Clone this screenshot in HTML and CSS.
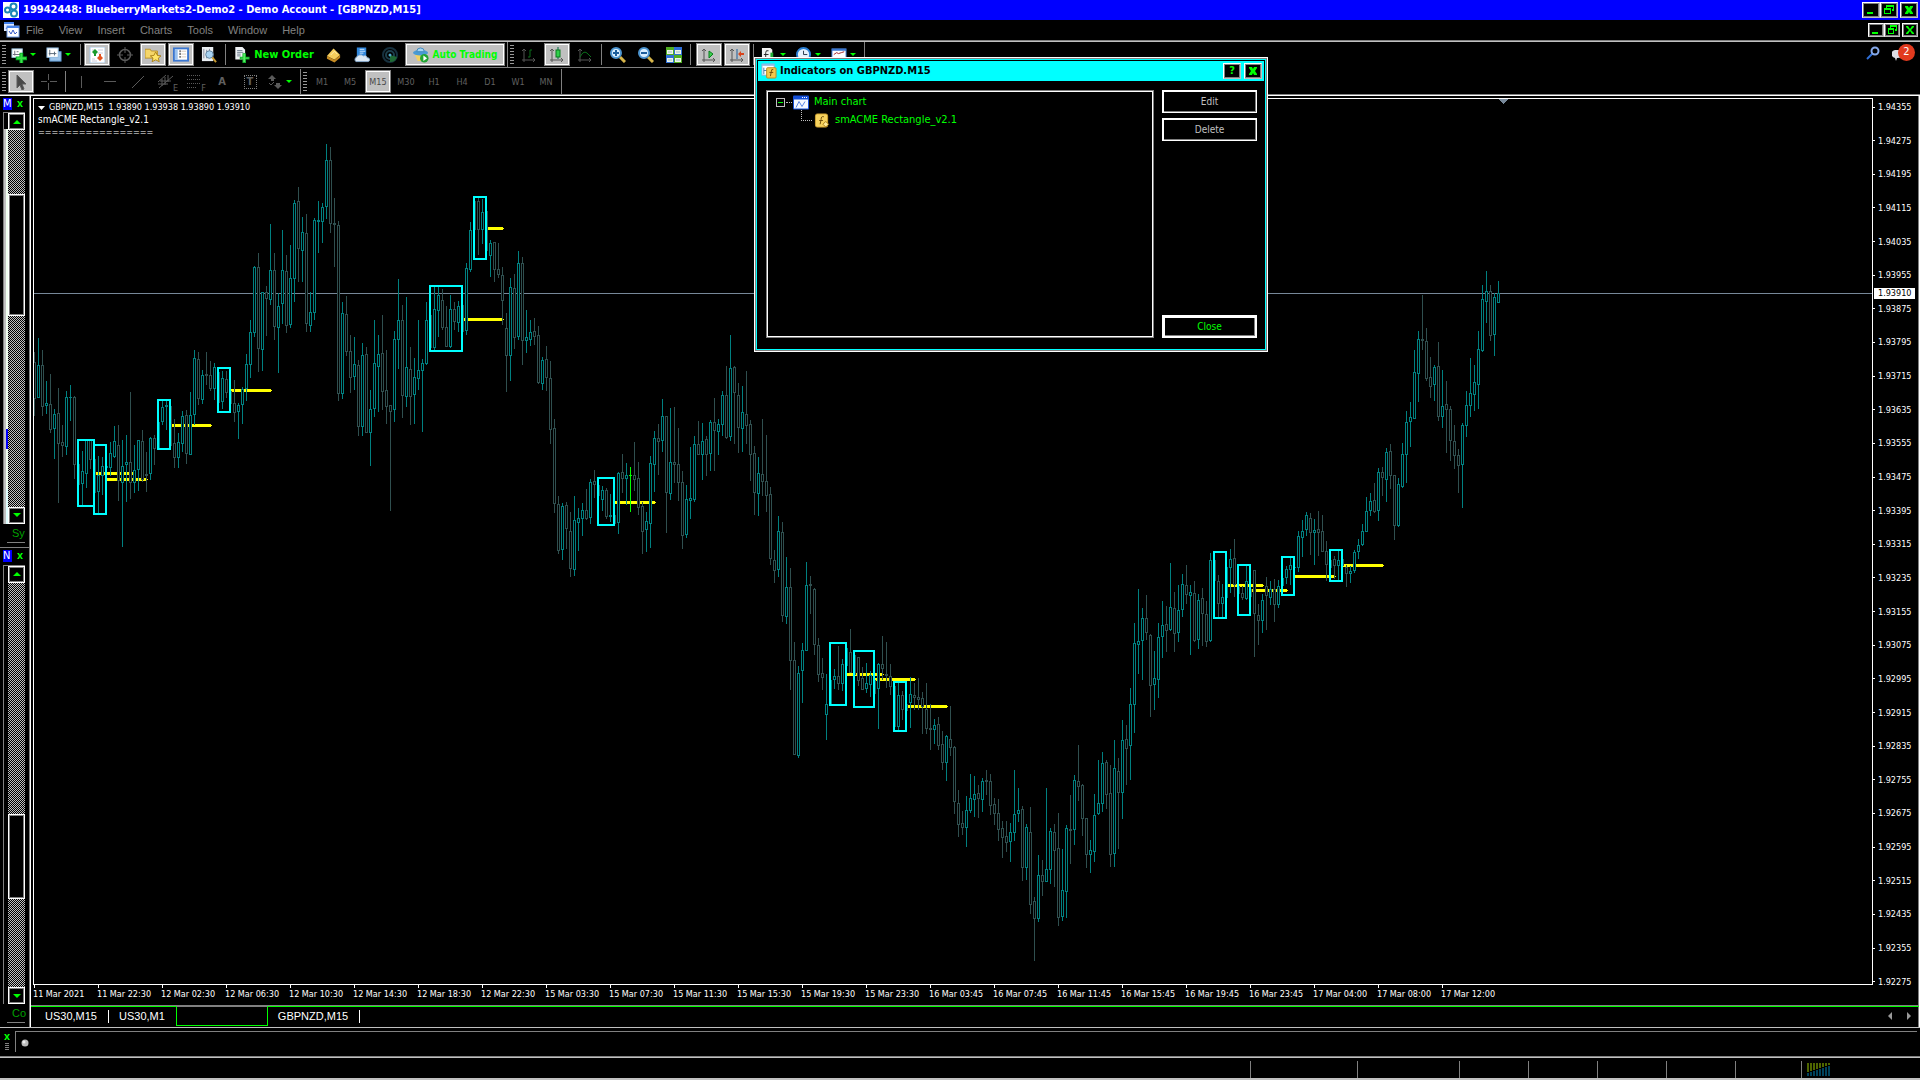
FILE: index.html
```html
<!DOCTYPE html>
<html lang="en">
<head>
<meta charset="utf-8">
<title>19942448: BlueberryMarkets2-Demo2 - Demo Account - [GBPNZD,M15]</title>
<link rel="stylesheet" href="styles.css">
<script src="chart.js" defer></script>
</head>
<body>
<header class="titlebar">
  <svg class="ico" viewBox="0 0 16 16"><rect width="16" height="16" fill="#fff"/><g fill="none" stroke="#1b86b8" stroke-width="2"><circle cx="10.500" cy="4.500" r="3"/><circle cx="4.500" cy="8" r="2.500"/><circle cx="11" cy="11.500" r="3"/></g></svg>
  <h1>19942448: BlueberryMarkets2-Demo2 - Demo Account - [GBPNZD,M15]</h1>
  <div class="winbtns">
    <button class="wb" aria-label="Minimize"><svg viewBox="0 0 12 12"><path d="M2 8h6v2H2z"/></svg></button>
    <button class="wb" aria-label="Restore"><svg viewBox="0 0 12 12"><path d="M3 1h8v6H9V5h1V3H4v1H3zM1 4h7v6H1zm1 2v3h5V6z" fill-rule="evenodd"/></svg></button>
    <button class="wb apart" aria-label="Close window"><svg viewBox="0 0 12 12"><path d="M2 2h3l1 2 1-2h3v1L8 6l2 3v1H7L6 8l-1 2H2V9l2-3-2-3z"/></svg></button>
  </div>
</header>
<nav class="menubar">
  <svg class="ico" viewBox="0 0 16 16"><rect x="0" y="0" width="10" height="9" fill="#dfeaff"/><path d="M0 0h10v2H0z" fill="#3f7fe8"/><path d="M2 7l2-3 1 2 2-2" stroke="#3358c8" fill="none"/><rect x="3" y="4" width="12" height="11" fill="#fff" stroke="#6f9ce8"/><path d="M3 4h12v2H3z" fill="#4a86ea"/><path d="M5 9l2 3 2-4 2 4 2-2" stroke="#3358c8" fill="none"/></svg>
  <a href="#file">File</a><a href="#view">View</a><a href="#insert">Insert</a><a href="#charts">Charts</a><a href="#tools">Tools</a><a href="#window">Window</a><a href="#help">Help</a>
  <div class="winbtns">
    <button class="wb small" aria-label="Minimize chart"><svg viewBox="0 0 12 12"><path d="M2 8h6v2H2z"/></svg></button>
    <button class="wb small" aria-label="Restore chart"><svg viewBox="0 0 12 12"><path d="M4 1h7v6H9V5h1V3H5v1H4zM2 4h6v6H2zm1 2v3h4V6z" fill-rule="evenodd"/></svg></button>
    <button class="wb small apart" aria-label="Close chart"><svg viewBox="0 0 12 12"><path d="M2 2h2l2 3 2-3h2v1L7 6l3 3v1H8L6 7l-2 3H2V9l3-3-3-3z"/></svg></button>
  </div>
</nav>

<div class="toolbars">
  <div class="toolrows">
    <div class="toolrow standard">
      <i class="grip"></i>
      <button class="tb drop" aria-label="New chart"><svg class="ico" viewBox="0 0 17 17"><rect x="1" y="2" width="11" height="9" fill="#fff" stroke="#9cc3e0"/><path d="M4 4v5M2 8h8M6 5h2" stroke="#667" fill="none"/><path d="M9 6h4v4h4v4h-4v4H9v-4H5v-4h4z" fill="#0a2"/><path d="M10 7h2v4h4v2h-4v4h-2v-4H6v-2h4z" fill="#3be04a"/></svg><i class="arrow"></i></button>
      <button class="tb drop" aria-label="Profiles"><svg class="ico" viewBox="0 0 17 17"><rect x="4" y="5" width="12" height="10" fill="#9dc4ea" stroke="#5b96cf"/><rect x="1" y="1" width="12" height="10" fill="#fff" stroke="#8bb7de"/><path d="M4 3v6M3 7h8M9 5v4" stroke="#567" fill="none"/></svg><i class="arrow"></i></button>
      <i class="sep"></i>
      <button class="tb on" aria-label="Market Watch"><svg class="ico" viewBox="0 0 16 16"><rect x="1" y="0" width="15" height="16" fill="#fff" stroke="#a8c8e6"/><path d="M3 3h3M9 3h5M9 6h5M3 12h3M3 14h5" stroke="#ccd"/><path d="M6 2l3 3-3 3-3-3z" fill="#1a9a2c"/><path d="M5 6h2v3H5z" fill="#1a9a2c"/><path d="M11 14l-3-3 3-3 3 3z" fill="#e2521f"/><path d="M10 7h2v3h-2z" fill="#e2521f"/></svg></button>
      <button class="tb" aria-label="Data Window"><svg class="ico" viewBox="0 0 16 16"><g fill="none" stroke="#5a5a5a"><circle cx="8" cy="8" r="5.500" stroke-width="1.500"/><path d="M8 0v6M8 10v6M0 8h6M10 8h6"/></g></svg></button>
      <button class="tb on" aria-label="Navigator"><svg class="ico" viewBox="0 0 18 17"><path d="M0 2h6l1 2h7v8H0z" fill="#f5d66a" stroke="#b98f20"/><path d="M12 5l2 4 4 .5-3 2.500 1 4-4-2-4 2 1-4-3-2.500 4-.5z" fill="#ffe569" stroke="#a57a12"/></svg></button>
      <button class="tb on" aria-label="Terminal"><svg class="ico" viewBox="0 0 17 16"><rect x="1" y="1" width="15" height="13" fill="#fff" stroke="#3a76d0" stroke-width="2"/><path d="M2 2h3v11H2z" fill="#9bc2ee"/><path d="M7 4h1M7 7h1M7 10h1" stroke="#111" stroke-width="2"/><path d="M9 4h5M9 7h5M9 10h5" stroke="#d5c9b8"/></svg></button>
      <button class="tb" aria-label="Strategy Tester"><svg class="ico" viewBox="0 0 17 17"><rect x="1" y="0" width="12" height="15" fill="#e9eef2"/><path d="M3 2v10M6 3v9M9 2v6" stroke="#889"/><circle cx="9" cy="8" r="4" fill="#a9d3f2" stroke="#5b7f9c"/><path d="M12 11l4 5" stroke="#c99a2e" stroke-width="2"/></svg></button>
      <i class="sep"></i>
      <button class="tb wide"><svg class="ico" viewBox="0 0 17 18"><path d="M1 0h8l3 3v11H1z" fill="#eef1f4"/><path d="M3 4h6M3 6h7M3 8h4M3 10h4" stroke="#678"/><path d="M9 7h4v4h4v3h-4v4H9v-4H6v-3h3z" fill="#12b32c"/><path d="M10 8h2v4h4v1h-4v4h-2v-4H7v-1h3z" fill="#56ee62"/></svg>New Order</button>
      <button class="tb" aria-label="MetaEditor"><svg class="ico" viewBox="0 0 17 16"><path d="M1 9L8 1l7 7-6 5z" fill="#f5cd5c"/><path d="M1 9l8 4 6-5v3l-6 5-8-4z" fill="#c48a22"/><path d="M5 8l4-4 3 3" stroke="#fff0b0" fill="none"/></svg></button>
      <button class="tb" aria-label="Publish"><svg class="ico" viewBox="0 0 17 16"><path d="M3 0h10v10H3z" fill="#2f86dc"/><path d="M6 2h5M6 4h6M6 6h4" stroke="#cfe6ff"/><path d="M2 15a3 3 0 0 1 1-5 4 3 0 0 1 7-1 3 3 0 0 1 4 2 2 2 0 0 1 1 4z" fill="#dce9f6" stroke="#86abd0"/></svg></button>
      <button class="tb" aria-label="Signals"><svg class="ico" viewBox="0 0 16 16"><g fill="none"><circle cx="8" cy="8" r="7" stroke="#16303e" stroke-width="2"/><circle cx="8" cy="8" r="4" stroke="#1d3f4c" stroke-width="2"/></g><path d="M8 8l7 2a7 7 0 0 1-7 5z" fill="#1f6a34"/><circle cx="8" cy="8" r="1.500" fill="#4ba6c4"/></svg></button>
      <button class="tb on wide auto"><svg class="ico" viewBox="0 0 17 17"><path d="M2 8h11l-3 7H5z" fill="#f1d162"/><ellipse cx="8" cy="6" rx="8" ry="3" fill="#4a9bd4"/><path d="M4 5a4 4 0 0 1 8 0z" fill="#a6d5f5" stroke="#3d86bc"/><circle cx="12" cy="12" r="4.500" fill="#21a532"/><path d="M11 9l4 3-4 3z" fill="#fff"/></svg>Auto Trading</button>
      <i class="sep tall"></i>
      <i class="grip"></i>
      <button class="tb" aria-label="Bar chart"><svg class="ico" viewBox="0 0 16 16"><g fill="none"><path d="M3 2v13M1 13h13M1 4l2-2 2 2M12 11l2 2-2 2" stroke="#555"/><path d="M7 10h2V3h2" stroke="#0a6e1a"/></g></svg></button>
      <button class="tb on" aria-label="Candlesticks"><svg class="ico" viewBox="0 0 16 16"><g fill="none"><path d="M3 2v13M1 13h13M1 4l2-2 2 2M12 11l2 2-2 2" stroke="#555"/><path d="M9 0v12" stroke="#064"/><rect x="7" y="3" width="4" height="7" fill="#2fd04a" stroke="#0a7a1e"/></g></svg></button>
      <button class="tb" aria-label="Line chart"><svg class="ico" viewBox="0 0 16 16"><g fill="none"><path d="M3 2v13M1 13h13M1 4l2-2 2 2M12 11l2 2-2 2" stroke="#555"/><path d="M3 10q4-8 8-3l3 3" stroke="#0a6e1a"/></g></svg></button>
      <i class="sep"></i>
      <button class="tb" aria-label="Zoom in"><svg class="ico" viewBox="0 0 16 16"><path d="M10 10l5 5" stroke="#d8b64a" stroke-width="3"/><circle cx="6" cy="6" r="5" fill="#d9efff" stroke="#4c94cf" stroke-width="2"/><path d="M3 6h6M6 3v6" stroke="#1c5e9c" stroke-width="2"/></svg></button>
      <button class="tb" aria-label="Zoom out"><svg class="ico" viewBox="0 0 16 16"><path d="M10 10l5 5" stroke="#d8b64a" stroke-width="3"/><circle cx="6" cy="6" r="5" fill="#d9efff" stroke="#4c94cf" stroke-width="2"/><path d="M3 6h6" stroke="#1c5e9c" stroke-width="2"/></svg></button>
      <button class="tb" aria-label="Tile windows"><svg class="ico" viewBox="0 0 16 16"><path d="M0 0h8v8H0zM8 8h8v8H8z" fill="#4fae22"/><path d="M8 0h8v8H8zM0 8h8v8H0z" fill="#2f6fd8"/><path d="M1 3h6v4H1zM9 3h6v4H9zM1 11h6v4H1zM9 11h6v4H9z" fill="#eef6e8"/><path d="M2 5h4M10 5h4M2 13h4M10 13h4" stroke="#9bc"/></svg></button>
      <i class="sep"></i>
      <button class="tb on shift" aria-label="Auto scroll"><svg class="ico" viewBox="0 0 16 16"><g fill="none"><path d="M3 2v13M1 13h13M1 4l2-2 2 2M12 11l2 2-2 2" stroke="#555"/><path d="M8 4l4 3-4 4z" fill="#3ad04c" stroke="#0a7a1e"/></g></svg></button>
      <button class="tb on" aria-label="Chart shift"><svg class="ico" viewBox="0 0 16 16"><g fill="none"><path d="M3 2v13M1 13h13M1 4l2-2 2 2M12 11l2 2-2 2" stroke="#555"/><path d="M8 2v10" stroke="#1c5e9c"/><path d="M9 7l3-3v2h3v2h-3v2z" fill="#d8441c"/></g></svg></button>
      <i class="sep"></i>
      <button class="tb drop shift" aria-label="Indicators"><svg class="ico" viewBox="0 0 17 17"><path d="M1 1h9l2 2v13H1z" fill="#f2f2f2"/><path d="M8 4q-3-1-3 2v7M3 8h5" stroke="#222" fill="none"/><path d="M10 6h3v10h-3z" fill="#1fae33"/></svg><i class="arrow"></i></button>
      <button class="tb drop" aria-label="Periods"><svg class="ico" viewBox="0 0 17 17"><circle cx="8" cy="8" r="7" fill="#e6f2fc" stroke="#2b7fd4" stroke-width="2"/><path d="M8 4v4h4" stroke="#234" fill="none"/></svg><i class="arrow"></i></button>
      <button class="tb drop" aria-label="Templates"><svg class="ico" viewBox="0 0 17 17"><rect x="1" y="2" width="15" height="12" fill="#fff" stroke="#3a76d0"/><path d="M1 2h15v2H1z" fill="#3a76d0"/><path d="M3 8l3-2 2 1 3-1 3-1" stroke="#a02020" fill="none"/></svg><i class="arrow"></i></button>
      <i class="sep tall"></i>
    </div>
    <div class="toolrow drawing">
      <i class="grip"></i>
      <button class="tb on" aria-label="Cursor"><svg class="ico" viewBox="0 0 16 16"><path d="M4 1v13l3-3 2 5 2-1-2-5h4z" fill="#484848"/></svg></button>
      <button class="tb" aria-label="Crosshair"><svg class="ico" viewBox="0 0 16 16"><path d="M7.500 0v6M7.500 9v7M0 7.500h6M9 7.500h7"/></svg></button>
      <i class="sep"></i>
      <button class="tb" aria-label="Vertical line"><svg class="ico" viewBox="0 0 16 16"><path d="M7.500 2v12"/></svg></button>
      <button class="tb" aria-label="Horizontal line"><svg class="ico" viewBox="0 0 16 16"><path d="M2 7.500h12"/></svg></button>
      <button class="tb" aria-label="Trendline"><svg class="ico" viewBox="0 0 16 16"><path d="M2 14L14 2"/></svg></button>
      <button class="tb" aria-label="Equidistant channel"><svg class="ico" viewBox="0 0 16 16"><path d="M0 8l8-7M1 14L15 2M4 5v7M7 3v8M10 1v7M0 10h10M2 7h11"/></svg><small>E</small></button>
      <button class="tb" aria-label="Fibonacci retracement"><svg class="ico" viewBox="0 0 16 16"><path d="M1 1.500h14M1 5.500h14M1 9.500h14M1 13.500h9" stroke-dasharray="1 1"/></svg><small>F</small></button>
      <button class="tb letter">A</button>
      <button class="tb letter boxed"><span>T</span></button>
      <button class="tb drop" aria-label="Arrows"><svg class="ico" viewBox="0 0 16 16"><path d="M5 1l4 4H7v2H4V5H1zM11 15l-4-4h2V9h4v2h2z" fill="#5a5a5a" stroke="none"/><path d="M2 9l2 2 3-3"/></svg><i class="arrow"></i></button>
      <i class="sep tall"></i>
      <i class="grip"></i>
      <button class="tb tf">M1</button><button class="tb tf">M5</button><button class="tb tf on">M15</button><button class="tb tf">M30</button><button class="tb tf">H1</button><button class="tb tf">H4</button><button class="tb tf">D1</button><button class="tb tf">W1</button><button class="tb tf">MN</button>
      <i class="sep tall"></i>
    </div>
  </div>
  <div class="status-icons">
    <svg width="14" height="14" viewBox="0 0 14 14" fill="none"><path d="M1 13l6-6" stroke="#2f6fd8" stroke-width="2"/><circle cx="9" cy="5" r="3.500" stroke="#86a9ea" stroke-width="2"/></svg>
    <div class="chat"><svg width="12" height="11" viewBox="0 0 12 11"><path d="M6 0a6 4 0 1 1-1 8l-1 3-1-3a5 4 0 0 1 3-8z" fill="#dcdce4"/></svg><b>2</b></div>
  </div>
</div>

<main class="workspace">
  <aside class="dock">
    <section class="pane watch">
      <header><b>M</b><button class="x" aria-label="Close Market Watch"><svg viewBox="0 0 6 6"><path d="M0 0h2l1 2 1-2h2L4 3l2 3H4L3 4 2 6H0l2-3z"/></svg></button></header>
      <div class="inner"><div class="sliver"><i></i></div><div class="scroll"><button class="sb up" aria-label="Scroll up"></button><div class="track t1"></div><div class="thumb"></div><div class="track t2"></div><button class="sb down" aria-label="Scroll down"></button></div></div>
      <footer>Sy</footer>
    </section>
    <section class="pane navi">
      <header><b>N</b><button class="x" aria-label="Close Navigator"><svg viewBox="0 0 6 6"><path d="M0 0h2l1 2 1-2h2L4 3l2 3H4L3 4 2 6H0l2-3z"/></svg></button></header>
      <div class="inner"><div class="scroll"><button class="sb up" aria-label="Scroll up"></button><div class="track t1"></div><div class="thumb"></div><div class="track t2"></div><button class="sb down" aria-label="Scroll down"></button></div></div>
      <footer>Co</footer>
    </section>
  </aside>
  <div class="mdi">
    <div class="chartwin">
      <div class="plotcol">
        <div class="plot">
          <svg id="plot" shape-rendering="crispEdges">
            <rect class="bid" x="0" y="194" width="100%" height="1"/>
            <g transform="translate(-34 -99)">
              <path class="level" id="levels"/>
              <path class="up" id="up"/>
              <path class="down" id="down"/>
              <path class="hollow" id="hollow"/>
              <path class="doji" d="M630 467h1v45h-1zM629 475h3v1h-3z"/>
              <g id="zones"></g>
              <path class="shiftmark" d="M1498 99h10l-5 5z"/>
            </g>
          </svg>
          <div class="legend"><p><svg width="7" height="4" viewBox="0 0 7 4"><path d="M0 0h7L3.500 4z" fill="#fff"/></svg>GBPNZD,M15&nbsp; 1.93890 1.93938 1.93890 1.93910</p><p class="name">smACME Rectangle_v2.1</p><p>=================</p></div>
        </div>
        <ol class="times"><li>11 Mar 2021</li><li>11 Mar 22:30</li><li>12 Mar 02:30</li><li>12 Mar 06:30</li><li>12 Mar 10:30</li><li>12 Mar 14:30</li><li>12 Mar 18:30</li><li>12 Mar 22:30</li><li>15 Mar 03:30</li><li>15 Mar 07:30</li><li>15 Mar 11:30</li><li>15 Mar 15:30</li><li>15 Mar 19:30</li><li>15 Mar 23:30</li><li>16 Mar 03:45</li><li>16 Mar 07:45</li><li>16 Mar 11:45</li><li>16 Mar 15:45</li><li>16 Mar 19:45</li><li>16 Mar 23:45</li><li>17 Mar 04:00</li><li>17 Mar 08:00</li><li>17 Mar 12:00</li></ol>
      </div>
      <div class="axis">
        <ol class="prices"><li>1.94355</li><li>1.94275</li><li>1.94195</li><li>1.94115</li><li>1.94035</li><li>1.93955</li><li>1.93875</li><li>1.93795</li><li>1.93715</li><li>1.93635</li><li>1.93555</li><li>1.93475</li><li>1.93395</li><li>1.93315</li><li>1.93235</li><li>1.93155</li><li>1.93075</li><li>1.92995</li><li>1.92915</li><li>1.92835</li><li>1.92755</li><li>1.92675</li><li>1.92595</li><li>1.92515</li><li>1.92435</li><li>1.92355</li><li>1.92275</li></ol>
        <output class="bidtag">1.93910</output>
      </div>
    </div>
    <nav class="tabs">
      <a href="#us30m15">US30,M15</a><i></i><a href="#us30m1">US30,M1</a><a href="#current" class="current" aria-label="Current chart"></a><a href="#gbpnzd">GBPNZD,M15</a><i></i>
      <div class="tabscroll"><button class="prev" aria-label="Previous tabs"></button><button class="next" aria-label="Next tabs"></button></div>
    </nav>
  </div>
</main>

<section class="terminal">
  <div class="handle"><button class="x" aria-label="Close Terminal"><svg viewBox="0 0 6 6"><path d="M0 0h2l1 2 1-2h2L4 3l2 3H4L3 4 2 6H0l2-3z"/></svg></button><i></i></div>
  <div class="termbody"><svg width="8" height="8" viewBox="0 0 8 8"><circle cx="4" cy="4" r="3.500" fill="#bbb"/><circle cx="3" cy="3" r="1.500" fill="#eee"/></svg></div>
</section>
<footer class="statusbar">
  <i></i><i></i><i></i><i></i><i></i><i></i><i></i>
  <div class="conn"><svg width="23" height="14" viewBox="0 0 23 14"><path d="M0 0h2v9H0zM3 0h2v8H3zM6 0h2v7H6zM9 0h2v6H9zM12 0h2v5h-2zM15 0h2v4h-2zM18 0h2v3h-2zM21 0h2v2h-2z" fill="#4e6600"/><path d="M0 10h2v3H0zM3 9h2v4H3zM6 8h2v5H6zM9 7h2v6H9zM12 6h2v7h-2zM15 5h2v8h-2zM18 4h2v9h-2zM21 3h2v10h-2z" fill="#00425c"/></svg></div>
</footer>

<div class="dialog" role="dialog" aria-labelledby="dlg-title">
  <header>
    <svg class="ico" viewBox="0 0 17 17"><rect x="1" y="1" width="13" height="12" fill="#fff" stroke="#7db2dc"/><path d="M1 1h13v2H1z" fill="#8bbbe4"/><path d="M3 5v7M3 8h4" stroke="#47a"/><rect x="6" y="5" width="10" height="11" rx="1" fill="#f2c94c" stroke="#b88a1e"/><path d="M13 7q-2-1-2 2l-1 5M9 10h4" stroke="#6b4a08" fill="none"/></svg>
    <h2 id="dlg-title">Indicators on GBPNZD.M15</h2>
    <button class="wb help" aria-label="Help">?</button>
    <button class="wb" aria-label="Close dialog"><svg viewBox="0 0 12 12"><path d="M2 2h3l1 2 1-2h3v1L8 6l2 3v1H7L6 8l-1 2H2V9l2-3-2-3z"/></svg></button>
  </header>
  <div class="dlgbody">
    <ul class="tree">
      <li><span class="expander"></span><i class="link"></i><svg class="ico" viewBox="0 0 16 14"><rect width="16" height="14" rx="1" fill="#1550d8"/><path d="M1 4h14v9H1z" fill="#f4f8ff"/><path d="M9 2h1M11 2h1M13 2h1" stroke="#fff"/><path d="M3 12l3-6 3 5 3-5" stroke="#5b86e6" fill="none"/></svg>Main chart
        <ul><li><i class="elbow"></i><svg class="ico" viewBox="0 0 16 16"><rect x="1" y="1" width="13" height="14" rx="2" fill="#f6d25e" stroke="#d0a231"/><path d="M10 4q-3-1-3 3l-1 5M5 8h4" stroke="#6b4a08" fill="none"/><path d="M12 9l3 3-3 3-3-3z" fill="#ffe998" stroke="#a57a12"/></svg>smACME Rectangle_v2.1</li></ul>
      </li>
    </ul>
    <div class="actions"><button class="ghost">Edit</button><button class="ghost">Delete</button><button class="close">Close</button></div>
  </div>
</div>
</body>
</html>
```
FILE: styles.css
```css
* { box-sizing: border-box; }
:root {
  --ui: "DejaVu Sans Condensed", "DejaVu Sans", "Noto Sans", sans-serif;
  --menu: "Liberation Sans", Arial, sans-serif;
  --lime: #00ff00;
  --silver: #c0c0c0;
  --gray: #808080;
}
body {
  margin: 0;
  min-height: 100vh;
  display: flex;
  flex-direction: column;
  background: #000;
  color: #fff;
  font: 11px/14px var(--ui);
  overflow: hidden;
}
h1, h2, p, ol, ul { margin: 0; padding: 0; list-style: none; }
button { font: inherit; color: inherit; background: #000; border: 0; padding: 0; }
a { color: inherit; text-decoration: none; }
.ico { width: 16px; height: 16px; flex: none; display: block; }

/* title and menu */
.titlebar { height: 20px; background: #00f; display: flex; align-items: center; padding: 0 2px 0 3px; gap: 4px; }
.titlebar h1 { font: bold 11px/20px var(--ui); white-space: nowrap; }
.menubar { height: 22px; display: flex; align-items: center; padding: 0 2px 1px 4px; color: #808080; font: 11px/18px var(--menu); border-bottom: 1px solid var(--silver); box-shadow: inset 0 -1px var(--gray); }
.menubar a { margin-right: 15px; }
.menubar .ico { margin-right: 6px; }
.winbtns { margin-left: auto; display: flex; }
.wb { width: 18px; height: 16px; border: 1px solid #fff; border-right-color: var(--silver); border-bottom-color: var(--silver); box-shadow: inset 0 0 0 1px var(--gray); color: var(--lime); display: grid; place-items: center; }
.wb svg { width: 12px; height: 12px; fill: currentColor; }
.wb.small { width: 16px; height: 14px; }
.wb.apart { margin-left: 2px; }

/* toolbars */
.toolbars { display: flex; justify-content: space-between; align-items: flex-start; border-bottom: 1px solid #fff; box-shadow: inset 0 -1px var(--gray); }
.toolrow { display: flex; align-items: center; gap: 2px; height: 27px; width: max-content; color: #606060; }
.toolrow.standard { height: 26px; border-bottom: 1px solid var(--gray); }
.grip { width: 4px; height: 20px; background: repeating-linear-gradient(#999 0 1px, transparent 1px 3px); margin: 0 1px 0 2px; }
.drawing .grip { margin-right: 0; }
.toolrow .tall + .grip { margin: 0; }
.sep { width: 1px; height: 21px; margin: 0 1px; background: var(--gray); }
.sep.tall { height: 25px; margin: 0; }
.tb { width: 26px; height: 23px; display: flex; align-items: center; justify-content: center; position: relative; }
.tb.on { background: var(--silver); border: 1px solid var(--gray); outline: 1px solid #fff; outline-offset: -2px; }
.tb.drop { width: 33px; gap: 3px; justify-content: flex-start; padding-left: 2px; }
.tb.shift { margin-left: 2px; }
.tb.wide { width: 90px; gap: 4px; color: var(--lime); font-weight: bold; white-space: nowrap; }
.tb.auto { width: 100px; font-size: 10px; }
.drawing .ico { stroke: #5a5a5a; }
.tb small { position: absolute; right: 1px; bottom: 0; font: 9px/9px var(--ui); background: #000; }
.tb.letter { font-size: 11px; font-weight: bold; }
.tb.boxed span { width: 13px; height: 14px; border: 1px dotted #808080; line-height: 12px; }
.tb.tf { font-size: 9px; }
.tb.tf.on { color: #484848; }
.arrow { width: 0; border: 3px solid transparent; border-top: 3px solid var(--lime); border-bottom: 0; flex: none; }
.status-icons { display: flex; gap: 12px; padding: 2px 5px 0 0; align-items: center; }
.chat { display: flex; align-items: flex-end; height: 17px; }
.chat b { width: 17px; height: 17px; border-radius: 50%; background: #e23a1e; font: 11px/16px var(--ui); text-align: center; margin-left: -6px; }

/* docked panes */
.workspace { flex: 1; min-height: 0; display: grid; grid-template-columns: 30px 1fr; }
.dock { display: flex; flex-direction: column; border-right: 1px solid var(--gray); min-height: 0; }
.pane { display: flex; flex-direction: column; padding-left: 3px; min-height: 0; }
.pane.watch { flex: 452 1 0; border-bottom: 1px solid var(--gray); }
.pane.navi { flex: 480 1 0; padding-top: 1px; }
.pane header { height: 16px; padding: 1px 0 2px; display: flex; align-items: center; gap: 5px; }
.pane header b { width: 9px; height: 12px; background: #00f; font: 11px/12px var(--ui); overflow: hidden; }
.x { width: 6px; height: 6px; display: block; }
.x svg { display: block; width: 6px; height: 6px; fill: var(--lime); }
.inner { flex: 1; display: flex; justify-content: flex-end; margin-right: 4px; border-left: 1px solid var(--gray); border-top: 1px solid var(--gray); min-height: 0; }
.sliver { flex: 1; margin-top: 16px; border-left: 2px solid var(--silver); background: linear-gradient(#f0fff0, #f0fff0 360px, #e0ffff 360px); }
.sliver i { display: block; height: 20px; margin-top: 300px; background: #00f; }
.scroll { width: 17px; display: flex; flex-direction: column; }
.sb { height: 17px; flex: none; border: 1px solid #fff; box-shadow: inset 0 0 0 1px var(--gray); display: grid; place-items: center; }
.sb::before { content: ""; border: 4px solid transparent; }
.sb.up::before { border-top: 0; border-bottom-color: var(--lime); }
.sb.down::before { border-bottom: 0; border-top-color: var(--lime); }
.track { background: repeating-conic-gradient(#c0c0c0 0 25%, #000 0 50%) 0 0 / 2px 2px; }
.thumb { flex: 121; border: 1px solid #fff; box-shadow: inset 0 0 0 1px var(--gray); }
.watch .t1 { flex: 64; }
.watch .t2 { flex: 192; }
.navi .t1 { flex: 224; }
.navi .thumb { flex: 81; }
.navi .t2 { flex: 85; }
.pane footer { height: 19px; margin: 0 4px 4px; padding-left: 5px; border-bottom: 1px solid var(--gray); color: #00a000; font: 11px/18px var(--menu); }

/* chart window */
.mdi { display: flex; flex-direction: column; min-width: 0; border-left: 1px solid #fff; border-right: 1px solid #fff; box-shadow: inset -1px 0 var(--gray); }
.chartwin { flex: 1; min-height: 0; display: flex; padding: 2px 0 0 2px; border-bottom: 1px solid #fff; }
.plotcol { flex: 1; min-width: 0; display: flex; flex-direction: column; }
.plot { flex: 1; min-height: 0; position: relative; border: 1px solid #fff; }
.plot > svg { display: block; position: absolute; width: 100%; height: 100%; }
.legend { position: relative; padding: 2px 4px; font-size: 9px; line-height: 13px; }
.legend svg { margin-right: 4px; }
.legend .name { font-size: 10px; line-height: 12px; }
.times { height: 20px; display: flex; font-size: 9px; line-height: 12px; }
.times li { width: 64px; flex: none; white-space: nowrap; padding-top: 3px; position: relative; }
.times li::before { content: ""; position: absolute; left: 1px; top: 0; width: 1px; height: 3px; background: #fff; }
.axis { width: 46px; position: relative; padding: 3px 0 17px; }
.prices { height: 100%; display: flex; flex-direction: column; justify-content: space-between; font-size: 9px; line-height: 12px; }
.prices li { display: flex; align-items: center; gap: 3px; }
.prices li::before { content: ""; width: 2px; height: 1px; background: #fff; }
.bidtag { position: absolute; left: 1px; top: 190px; width: 41px; padding-left: 4px; background: #fff; color: #000; font-size: 9px; line-height: 11px; }
.bid { fill: #778899; }
.level { fill: #ff0; }
.up { fill: #008080; }
.down { fill: #2f4f4f; }
.hollow { fill: #000; }
.doji { fill: #0f0; }
.shiftmark { fill: #778899; }
.zone { fill: none; stroke: #0ff; stroke-width: 2px; }

.tabs { height: 21px; display: flex; align-items: center; padding-bottom: 2px; border-top: 1px solid var(--lime); box-shadow: 0 -1px var(--gray); font: 11px/18px var(--menu); }
.tabs a { padding: 0 11px 0 10px; }
.tabs a:first-child { padding-left: 14px; }
.tabs > i { width: 1px; height: 13px; background: #fff; }
.tabs a.current { width: 92px; height: 20px; background: #000; border: 1px solid var(--lime); border-top: 1px solid var(--gray); }
.tabscroll { margin-left: auto; display: flex; gap: 15px; padding-right: 8px; }
.tabscroll button { width: 0; height: 0; border: 4px solid transparent; background: none; }
.tabscroll .prev { border-left: 0; border-right-color: #999; }
.tabscroll .next { border-right: 0; border-left-color: #999; }

/* terminal and status bar */
.terminal { height: 31px; border-top: 1px solid var(--silver); border-bottom: 1px solid var(--silver); box-shadow: inset 0 -1px var(--gray); display: flex; padding: 3px 3px 5px 0; }
.handle { width: 15px; padding: 3px 0 0 4px; }
.handle i { display: block; width: 4px; height: 8px; margin: 3px 0 0 1px; background: repeating-linear-gradient(var(--gray) 0 1px, transparent 1px 2px); }
.termbody { flex: 1; border-top: 1px solid var(--gray); border-left: 1px solid var(--gray); padding: 7px 0 0 5px; }
.termbody svg { display: block; }
.statusbar { height: 22px; border-bottom: 2px solid var(--silver); display: flex; justify-content: flex-end; padding-top: 3px; }
.statusbar i { width: 69px; border-left: 1px solid var(--gray); }
.statusbar i:nth-child(1) { width: 107px; }
.statusbar i:nth-child(2) { width: 102px; }
.statusbar i:nth-child(7) { width: 66px; }
.statusbar .conn { width: 119px; border-left: 1px solid var(--gray); padding: 2px 0 0 5px; }

/* floating dialog */
.dialog { position: absolute; left: 754px; top: 57px; width: 514px; height: 295px; display: flex; flex-direction: column; background: #000; border: 1px solid #fff; box-shadow: inset 0 0 0 1px var(--gray), inset 0 0 0 2px #0ff; padding: 3px; }
.dialog > header { height: 20px; background: #0ff; color: #000; display: flex; align-items: center; gap: 3px; padding: 0 2px 0 3px; }
.dialog h2 { font: bold 11px/20px var(--ui); margin: 0 auto 0 0; }
.help { font: bold 11px/12px var(--ui); }
.dlgbody { flex: 1; min-height: 0; display: flex; gap: 8px; padding: 9px 7px 10px 8px; }
.tree { flex: 1; border: 1px solid var(--gray); outline: 1px solid #fff; outline-offset: -2px; padding: 2px 9px; color: var(--lime); font-size: 11px; line-height: 18px; }
.tree li { position: relative; }
.tree .ico, .tree .link, .tree .elbow, .expander { display: inline-block; vertical-align: middle; }
.tree .ico { margin-right: 5px; height: 15px; }
.expander { width: 9px; height: 9px; border: 1px solid var(--silver); background: linear-gradient(var(--lime), var(--lime)) center / 5px 1px no-repeat; }
.link { width: 6px; margin: 0 1px; border-top: 1px dotted var(--silver); }
.tree ul { padding-left: 25px; }
.elbow { width: 11px; height: 11px; margin: -10px 2px 0 0; border-left: 1px dotted var(--silver); border-bottom: 1px dotted var(--silver); }
.actions { width: 95px; display: flex; flex-direction: column; gap: 5px; }
.actions button { height: 23px; border: 1px solid #fff; box-shadow: inset 1px 1px #fff, inset -1px -1px var(--gray); font-size: 10px; }
.actions .ghost { color: var(--silver); }
.actions .close { margin-top: auto; color: var(--lime); border: 2px solid #fff; }
```
FILE: chart.js
```js
// Candles run left to right, 4px apart. Each row is: direction, high, body top, body bottom, low.
// Every block keeps its own origin and number of units per pixel.
const blocks = [
  { x: 34, y: 130, k: 3, rows: `d 666 697 806 857;u 624 706 802 802;d 660 706 829 857;u 753 820 827 851;d 732 823 899 908;u 837 853 896 987;d 774 850 941 1118;d 885 937 947 980;u 783 802 949 975;u 765 802 802 873;d 798 802 1003 1047;d 1002 1002 1063 1065;u 963 1024 1060 1127;u 930 930 1030 1074;d 930 930 989 1017;d 987 987 1088 1088;u 978 1035 1084 1148;u 981 1009 1036 1095;u 1008 1008 1013 1015;u 936 970 1013 1038;u 888 934 980 984;d 885 946 1050 1113;u 930 1009 1058 1250;u 915 997 1004 1116;d 786 997 1058 1107;u 945 1021 1058 1089;u 930 931 1018 1083;d 900 934 1048 1056;d 966 1033 1036 1086;u 921 925 1030 1050;d 915 925 955 1005;u 877 877 955 955;u 812 832 875 885;u 812 826 829 900;d 828 828 947 947;d 867 940 983 1014;u 909 937 983 1014;u 843 859 940 966;d 840 856 970 1002;u 786 856 973 973;u 660 685 854 885;d 666 688 806 825;u 720 736 808 822;d 666 734 737 765;d 693 736 776 783;u 699 712 776 810;d 727 727 818 818;u 723 745 815 837;d 723 748 788 804;d 783 783 820 820;d 750 820 848 876;u 819 826 845 927;u 771 779 824 882;u 672 703 775 813;u 570 607 704 744;u 408 412 608 621;d 369 412 656 726;u 486 487 658 723;d 468 487 506 618;u 282 421 509 525;d 369 421 590 630;u 489 529 592 729;u 300 421 521 582;d 375 424 587 609;u 345 445 584 594;u 210 220 445 516;d 171 214 356 456;u 261 307 361 456;d 252 310 581 606;u 486 547 587 606;u 264 271 548 570;u 213 271 274 369;u 219 232 275 339;u 42 91 230 267;d 51 91 281 309;d 204 281 284 411;d 273 286 791 813;u 516 550 791 807;d 498 553 665 678;d 615 664 743 789;u 621 703 740 780;d 690 706 890 918;u 639 676 890 918;d 651 673 908 908;u 780 838 908 1008;u 570 700 836 861;u 615 673 710 846;d 555 670 785 840;d 660 781 830 882;d 825 826 845 1143;u 603 628 839 876;u 447 571 629 717;d 525 571 797 864;u 501 712 800 831;d 651 718 800 885;u 684 742 794 882;u 570 721 746 780;u 687 700 722 906;u 516 571 701 705;d 555 555 651 651;u 468 538 653 660;u 471 496 542 621;d 477 511 593 600;d 528 592 650 650;u 495 538 650 654;d 516 538 575 600;u 513 529 578 606;d 525 525 603 603;u 399 415 602 615;u 276 301 419 426;d 213 213 297 297;d 204 214 299 375;u 207 247 299 342;d 243 243 360 360;u 330 340 377 441;d 336 337 419 456;d 339 419 434 444;d 411 436 512 585;d 549 595 677 786` },
  { x: 510, y: 180, k: 3, rows: `u 294 322 527 603;d 282 325 473 507;u 213 250 470 480;d 231 250 482 555;u 390 472 482 519;u 420 457 479 498;d 414 454 470 495;d 438 466 608 612;u 531 541 611 630;d 498 538 593 633;d 543 595 749 792;d 717 745 971 999;d 948 973 1112 1122;u 969 979 1109 1140;d 966 976 1046 1107;d 996 1054 1166 1191;u 948 1021 1169 1188;u 984 1015 1028 1113;u 969 991 1016 1068;d 927 991 1016 1020;u 897 907 1013 1032;d 870 904 914 954;d 916 916 947 947;u 918 931 959 993;d 924 931 1010 1017;u 942 1006 1010 1026;d 1006 1006 1030 1032;u 876 880 1028 1062;d 822 877 896 939;u 849 886 896 975;d 886 886 886 888;d 786 886 899 933;d 846 895 983 1005;d 966 979 1055 1122;u 996 1024 1049 1116;u 828 850 1031 1104;u 753 775 854 936;d 732 775 785 885;u 657 709 782 816;d 708 709 938 1059;u 684 847 941 960;d 681 847 854 909;d 744 853 908 963;d 873 907 1067 1107;u 915 958 1064 1074;u 801 955 962 1017;u 768 793 959 966;d 723 793 822 822;u 729 784 824 900;d 768 778 824 888;u 720 727 821 873;d 654 727 752 873;u 717 733 755 825;u 633 646 734 768;d 558 646 773 777;u 465 565 770 783;d 558 562 638 792;d 609 646 743 819;u 618 697 746 816;d 573 703 737 792;d 720 733 824 903;d 798 820 938 1005;u 831 880 941 1008;d 717 883 905 948;d 765 904 947 996;d 921 943 1136 1155;d 1110 1141 1172 1209;u 1008 1054 1169 1191` },
  { x: 782, y: 340, k: 2.45, rows: `d 446 471 675 691;u 532 606 678 696;d 559 606 785 857;d 740 785 1016 1016;u 799 817 1018 1024;u 742 760 809 889;u 544 601 761 761;d 578 599 601 671;d 608 611 746 772;d 730 748 820 838;d 779 817 827 857;u 818 893 917 980;u 833 833 893 893;u 806 824 832 855;d 750 824 842 857;u 782 795 842 860;u 755 755 798 798;d 708 766 814 814;d 774 774 820 820;d 777 777 834 848;d 801 829 856 856;u 791 841 854 865;u 811 822 844 875;d 835 835 865 865;u 791 795 854 953;d 725 795 805 832;d 740 819 822 853;d 794 825 849 870;d 850 850 947 947;u 838 871 947 957;d 860 871 905 931;d 892 892 907 907;u 826 868 888 951;d 840 871 876 906;d 828 876 881 906;d 862 878 898 965;d 840 905 952 965;d 892 952 954 1004;u 929 944 954 990;d 924 942 994 1004;d 958 991 1035 1053;u 968 971 1035 1080;d 897 979 998 1019;d 995 998 1131 1161;d 1102 1135 1187 1218;d 1154 1184 1195 1213;u 1117 1152 1195 1242;u 1063 1123 1153 1159;u 1068 1113 1126 1169;d 1090 1111 1124 1171;u 1073 1081 1126 1156;d 1053 1079 1081 1115;d 1063 1081 1141 1164;d 1122 1138 1160 1188;d 1125 1160 1199 1227;d 1178 1197 1219 1269;d 1178 1216 1231 1254;u 1183 1206 1229 1279;u 1053 1162 1207 1227;u 1098 1152 1160 1181;d 1142 1150 1293 1325;u 1186 1194 1293 1323;d 1144 1206 1383 1406;d 1365 1375 1418 1521;u 1262 1312 1418 1426;d 1273 1312 1327 1362;u 1098 1297 1327 1327;u 1196 1204 1297 1333;d 1186 1206 1251 1340;d 1159 1246 1415 1436;u 1246 1348 1413 1423;u 1188 1196 1351 1416;d 1115 1199 1201 1284;u 1066 1079 1199 1237;d 992 1081 1094 1129;d 1088 1091 1172 1215;d 1171 1172 1261 1294;u 1225 1250 1261 1306;u 1112 1165 1253 1279;u 1029 1135 1160 1164;u 1009 1037 1136 1156;d 1029 1035 1114 1149;d 1041 1111 1261 1291;u 980 1050 1258 1291;d 1024 1057 1109 1247;u 931 981 1109 1174;d 943 979 1001 1090;u 853 893 994 1078;u 693 743 893 963;u 610 738 746 818;u 657 682 737 833;d 625 682 717 735;d 720 724 847 924;u 762 829 844 906;u 693 729 832 877` },
  { x: 1162, y: 260, k: 2.306, rows: `u 786 843 868 918;d 799 841 854 904;u 699 801 852 855;d 766 803 861 904;u 749 808 859 881;u 724 748 806 823;d 703 751 771 794;u 749 767 773 911;d 740 769 878 882;u 770 785 875 897;d 756 780 815 890;d 786 818 880 892;u 676 693 878 882;d 692 692 738 738;d 726 741 792 825;u 746 778 792 825;u 708 708 778 778;u 666 690 710 768;d 643 688 749 777;d 752 752 768 768;d 752 769 778 784;u 703 741 781 785;d 759 759 775 775;d 715 716 815 915;d 793 820 831 888;u 771 785 831 860;d 731 753 773 853;u 741 760 778 796;d 736 760 794 835;u 738 753 795 802;u 735 735 751 751;u 706 713 732 746;u 687 704 713 749;u 708 708 710 710;u 625 637 710 719;u 600 626 640 685;u 581 589 622 636;d 583 596 629 680;u 597 624 629 703;d 579 622 629 683;d 588 626 672 672;d 648 672 702 740;d 692 692 708 708;d 683 690 705 735;u 671 693 705 741;d 690 690 705 705;d 704 708 724 754;u 706 718 724 745;u 669 674 716 722;u 643 658 672 689;u 609 626 656 659;u 546 580 626 627;u 537 557 578 590;d 514 554 580 583;u 480 490 578 602;d 477 490 502 544;u 434 443 507 558;d 424 441 497 528;d 497 497 612 646;u 503 518 612 616;u 422 448 522 526;u 348 375 449 514;u 327 363 373 431;u 208 260 366 367;u 164 183 262 327;d 81 183 186 208;d 157 188 273 279;d 224 271 292 318;u 241 248 287 325;d 189 245 361 371;u 254 338 361 387;d 279 333 345 445;d 337 345 416 463;d 380 418 451 482;d 436 451 474 537;u 376 381 472 572;u 302 335 382 408;u 226 308 335 362;u 242 282 310 348;u 164 206 287 344;u 58 91 209 213;u 25 72 96 145;d 58 72 174 187;u 76 86 172 221;u 48 77 98 98` }
];

// Zone rectangles: left, top, right, bottom.
const zones = [[78,440,94,506],[94,445,106,514],[158,400,170,449],[218,368,230,412],[430,286,462,351],[474,197,486,259],[598,478,614,525],[830,643,846,705],[854,651,874,707],[894,682,906,731],[1214,552,1226,618],[1238,565,1250,615],[1282,557,1294,595],[1330,550,1342,581]];

// Breakout levels: left, right, centre row.
const levels = [[96,133,473],[106,147,479],[171,211,425],[230,271,390],[464,503,319],[488,503,228],[615,655,502],[847,883,674],[875,915,679],[908,947,706],[1227,1263,585],[1251,1287,590],[1295,1335,576],[1343,1383,565]];

const box = (x, y, w, h) => `M${x} ${y}h${w}v${h}h${-w}z`;
const paths = { u: "", d: "", hollow: "" };

for (const b of blocks) {
  b.rows.split(";").forEach((row, i) => {
    const [dir, ...v] = row.split(" ");
    const [high, top, bottom, low] = v.map(Number);
    const x = b.x + i * 4;
    const hi = b.y + Math.round(high / b.k);
    const lo = b.y + Math.round(low / b.k);
    const t = b.y + Math.floor(top / b.k);
    const e = b.y + Math.floor(bottom / b.k) + 1;
    if (hi < t) paths[dir] += box(x, hi, 1, t - hi);
    if (lo > e) paths[dir] += box(x, e, 1, lo - e);
    paths[dir] += box(x - 1, t, 3, e - t);
    if (e - t > 2) paths.hollow += box(x, t + 1, 1, e - t - 2);
  });
}

document.getElementById("up").setAttribute("d", paths.u);
document.getElementById("down").setAttribute("d", paths.d);
document.getElementById("hollow").setAttribute("d", paths.hollow);
document.getElementById("levels").setAttribute("d",
  levels.map(([l, r, y]) => box(l, y - 1, r - l, 3) + box(r, y, 1, 1)).join(""));

for (const [l, t, r, b] of zones) {
  const el = document.createElementNS("http://www.w3.org/2000/svg", "rect");
  el.setAttribute("class", "zone");
  el.setAttribute("x", l);
  el.setAttribute("y", t);
  el.setAttribute("width", r - l);
  el.setAttribute("height", b - t);
  document.getElementById("zones").append(el);
}
```
